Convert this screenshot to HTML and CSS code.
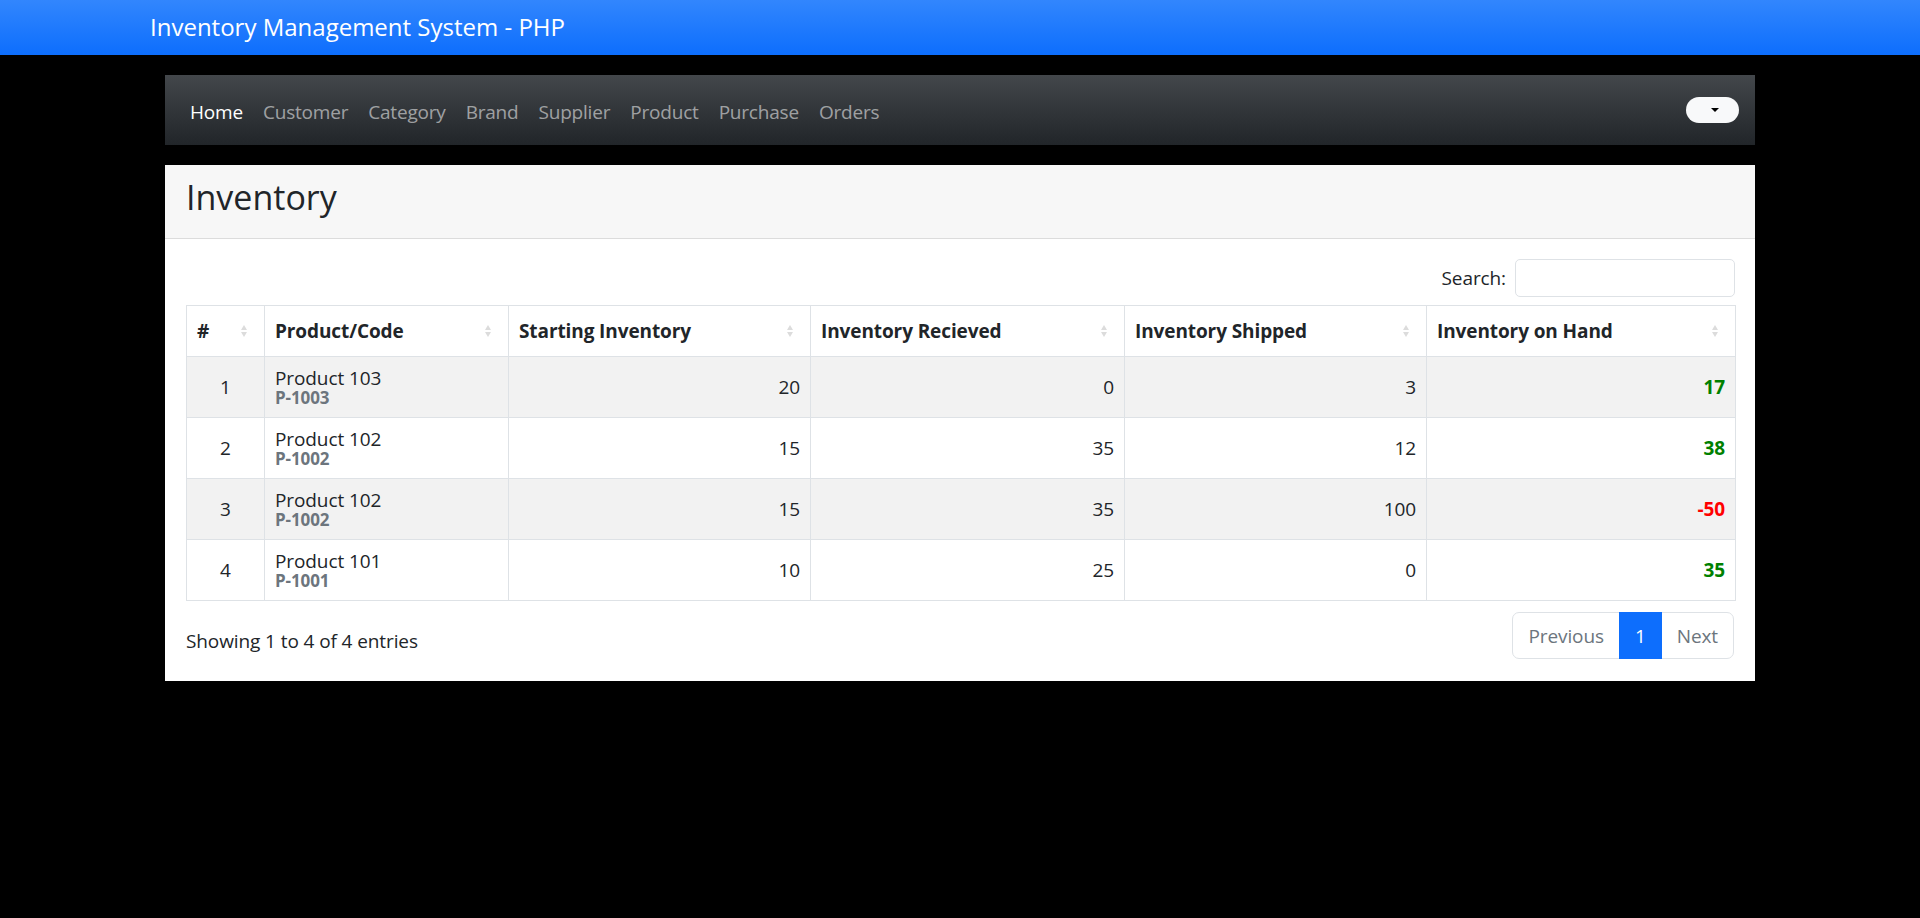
FILE: index.html
```html
<!DOCTYPE html>
<html lang="en">
<head>
<meta charset="utf-8">
<title>Inventory Management System - PHP</title>
<link rel="stylesheet" href="styles.css">
</head>
<body>
<header class="topbar">
  <div class="brand">Inventory Management System - PHP</div>
</header>
<main class="wrap">
  <nav class="mainnav">
    <ul class="navlinks">
      <li><a class="navlink active" href="#">Home</a></li>
      <li><a class="navlink" href="#">Customer</a></li>
      <li><a class="navlink" href="#">Category</a></li>
      <li><a class="navlink" href="#">Brand</a></li>
      <li><a class="navlink" href="#">Supplier</a></li>
      <li><a class="navlink" href="#">Product</a></li>
      <li><a class="navlink" href="#">Purchase</a></li>
      <li><a class="navlink" href="#">Orders</a></li>
    </ul>
    <button class="user-toggle" type="button"><span class="caret"></span></button>
  </nav>

  <section class="card">
    <div class="card-header">
      <h3 class="card-title">Inventory</h3>
    </div>
    <div class="card-body">
      <div class="dt-top">
        <label class="dt-search">Search:<input class="dt-input" type="search"></label>
      </div>
      <table class="inv-table">
        <thead>
          <tr>
            <th class="sortable">#</th>
            <th class="sortable">Product/Code</th>
            <th class="sortable">Starting Inventory</th>
            <th class="sortable">Inventory Recieved</th>
            <th class="sortable">Inventory Shipped</th>
            <th class="sortable">Inventory on Hand</th>
          </tr>
        </thead>
        <tbody>
          <tr>
            <td class="idx">1</td>
            <td class="prod"><div class="pname">Product 103</div><div class="pcode">P-1003</div></td>
            <td class="num">20</td>
            <td class="num">0</td>
            <td class="num">3</td>
            <td class="num onhand pos">17</td>
          </tr>
          <tr>
            <td class="idx">2</td>
            <td class="prod"><div class="pname">Product 102</div><div class="pcode">P-1002</div></td>
            <td class="num">15</td>
            <td class="num">35</td>
            <td class="num">12</td>
            <td class="num onhand pos">38</td>
          </tr>
          <tr>
            <td class="idx">3</td>
            <td class="prod"><div class="pname">Product 102</div><div class="pcode">P-1002</div></td>
            <td class="num">15</td>
            <td class="num">35</td>
            <td class="num">100</td>
            <td class="num onhand neg">-50</td>
          </tr>
          <tr>
            <td class="idx">4</td>
            <td class="prod"><div class="pname">Product 101</div><div class="pcode">P-1001</div></td>
            <td class="num">10</td>
            <td class="num">25</td>
            <td class="num">0</td>
            <td class="num onhand pos">35</td>
          </tr>
        </tbody>
      </table>
      <div class="dt-bottom">
        <div class="dt-info">Showing 1 to 4 of 4 entries</div>
        <ul class="pagination">
          <li class="page-item disabled"><a class="page-link" href="#">Previous</a></li>
          <li class="page-item active"><a class="page-link" href="#">1</a></li>
          <li class="page-item disabled"><a class="page-link" href="#">Next</a></li>
        </ul>
      </div>
    </div>
  </section>
</main>
</body>
</html>
```

FILE: styles.css
```css
* { box-sizing: border-box; }

html, body {
  margin: 0;
  padding: 0;
  background: #000;
  font-family: "Open Sans", "Noto Sans", "Liberation Sans", sans-serif;
  font-size: 19px;
  letter-spacing: -0.1px;
  line-height: 30px;
  color: #212529;
}

.topbar {
  height: 55px;
  display: flex;
  align-items: center;
  background: linear-gradient(180deg, #3286fd 0%, #0d6efd 100%);
}

.brand {
  padding-left: 150px;
  padding-bottom: 2px;
  color: #fff;
  font-size: 24px;
  line-height: 30px;
  letter-spacing: 0;
}

.wrap {
  padding: 20px 165px;
}

.mainnav {
  height: 70px;
  display: flex;
  align-items: center;
  justify-content: space-between;
  padding: 0 16px 0 15px;
  background: linear-gradient(180deg, #43474b 0%, #212529 100%);
  margin-bottom: 20px;
}

.navlinks {
  list-style: none;
  margin: 0;
  padding: 0;
  display: flex;
}

.navlink {
  display: block;
  padding: 12px 10px 8px;
  color: rgba(255, 255, 255, 0.55);
  text-decoration: none;
  letter-spacing: -0.2px;
}

.navlink.active { color: #fff; }

.user-toggle {
  width: 53px;
  height: 26px;
  border: 0;
  border-radius: 13px;
  background: #f8f9fa;
  padding: 0 0 0 5px;
  display: flex;
  align-items: center;
  justify-content: center;
}

.caret {
  width: 0;
  height: 0;
  border-left: 4px solid transparent;
  border-right: 4px solid transparent;
  border-top: 4px solid #000;
}

.card {
  background: #fff;
}

.card-header {
  background: #f7f7f7;
  border-bottom: 1px solid #dcdcdc;
  padding: 11px 21px 10px;
}

.card-title {
  margin: 0 0 10px;
  font-size: 34px;
  line-height: 42px;
  font-weight: 400;
  letter-spacing: 0;
  color: #212529;
}

.card-body {
  padding: 20px 20px 20px 21px;
}

.dt-top {
  display: flex;
  justify-content: flex-end;
}

.dt-search {
  display: flex;
  align-items: center;
  white-space: nowrap;
}

.dt-input {
  margin-left: 9px;
  width: 220px;
  height: 38px;
  border: 1px solid #dee2e6;
  border-radius: 5px;
  font: inherit;
  padding: 0 10px;
  background: #fff;
}

.inv-table {
  margin-top: 8px;
  width: 1549px;
  table-layout: fixed;
  border-collapse: collapse;
}

.inv-table th,
.inv-table td {
  border: 1px solid #dee2e6;
  padding: 10px;
  vertical-align: middle;
}

.inv-table th:nth-child(1) { width: 78px; }
.inv-table th:nth-child(2) { width: 244px; }
.inv-table th:nth-child(3) { width: 302px; }
.inv-table th:nth-child(4) { width: 314px; }
.inv-table th:nth-child(5) { width: 302px; }
.inv-table th:nth-child(6) { width: 309px; }

.inv-table th {
  text-align: left;
  font-weight: 700;
  position: relative;
  padding-right: 32px;
  height: 51px;
}

.sortable::before,
.sortable::after {
  content: "";
  position: absolute;
  right: 17px;
  width: 0;
  height: 0;
  border-left: 3px solid transparent;
  border-right: 3px solid transparent;
}

.sortable::before {
  bottom: 50%;
  margin-bottom: 1px;
  border-bottom: 5px solid #dcdcdc;
}

.sortable::after {
  top: 50%;
  margin-top: 1px;
  border-top: 5px solid #dcdcdc;
}

.inv-table tbody tr:nth-child(odd) td { background: #f2f2f2; }

.inv-table td { height: 61px; }

.inv-table td.prod { padding: 11px 10px 9px; }

.idx { text-align: center; }

.num { text-align: right; }

.pname { line-height: 20px; }

.pcode {
  line-height: 20px;
  font-size: 17px;
  font-weight: 700;
  color: #6c757d;
}

.onhand { font-weight: 700; }
.pos { color: #008000; }
.neg { color: #ff0000; }

.dt-bottom {
  display: flex;
  justify-content: space-between;
  align-items: flex-start;
  margin-top: 11px;
}

.dt-info {
  padding-top: 14px;
}

.pagination {
  list-style: none;
  margin: 0 1px 2px 0;
  padding: 0;
  display: flex;
}

.page-link {
  display: block;
  padding: 8px 15px 7px;
  border: 1px solid #dee2e6;
  margin-left: -1px;
  color: #6c757d;
  text-decoration: none;
  background: #fff;
  line-height: 30px;
}

.page-item:first-child .page-link {
  margin-left: 0;
  border-radius: 7px 0 0 7px;
}

.page-item:last-child .page-link {
  border-radius: 0 7px 7px 0;
}

.page-item.active .page-link {
  background: #0d6efd;
  border-color: #0d6efd;
  color: #fff;
  position: relative;
}
```
